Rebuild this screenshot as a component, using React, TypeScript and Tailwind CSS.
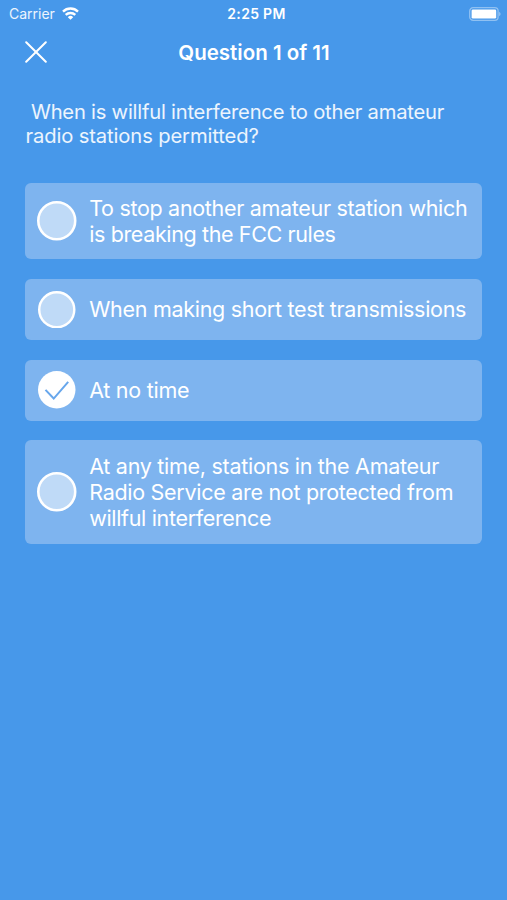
type Line = { text: string; tracking: string };
type Answer = { lines: Line[]; height: string; circle: string; selected?: boolean };

const answers: Answer[] = [
  {
    height: "h-[76.5px]",
    circle: "size-[39.5px]",
    lines: [
      { text: "To stop another amateur station which", tracking: "tracking-[-0.31px]" },
      { text: "is breaking the FCC rules", tracking: "tracking-[-0.37px]" },
    ],
  },
  {
    height: "h-[61px]",
    circle: "size-[37.5px]",
    lines: [{ text: "When making short test transmissions", tracking: "tracking-[-0.29px]" }],
  },
  {
    height: "h-[61px]",
    circle: "size-[37.5px]",
    selected: true,
    lines: [{ text: "At no time", tracking: "tracking-[-0.27px]" }],
  },
  {
    height: "h-[103.5px]",
    circle: "size-[39.5px]",
    lines: [
      { text: "At any time, stations in the Amateur", tracking: "tracking-[-0.28px]" },
      { text: "Radio Service are not protected from", tracking: "tracking-[-0.29px]" },
      { text: "willful interference", tracking: "tracking-[-0.33px]" },
    ],
  },
];

function StatusBar() {
  return (
    <div className="grid h-[27px] grid-cols-[1fr_auto_1fr] items-center pr-[6px] pl-[9px] text-[14px] leading-[17px]">
      <div className="flex items-center gap-[7px]">
        <span className="text-white/90">Carrier</span>
        <svg width="17" height="13" viewBox="0 0 17 13" fill="none" stroke="white" strokeWidth="2.4">
          <path d="M1 4.6a10.8 10.8 0 0 1 15 0" />
          <path d="M3.7 7.9a7 7 0 0 1 9.6 0" />
          <path d="M8.5 12.8 5.8 10.2a3.8 3.8 0 0 1 5.4 0z" fill="white" stroke="none" />
        </svg>
      </div>
      <span className="pl-[3px] text-center font-semibold tracking-[0.3px]">2:25 PM</span>
      <svg className="justify-self-end" width="32" height="14" viewBox="0 0 32 14">
        <rect x="0.7" y="0.7" width="28.4" height="12.6" rx="3.4" fill="none" stroke="white" strokeOpacity=".4" strokeWidth="1.3" />
        <rect x="2.6" y="2.4" width="24.6" height="9.2" rx="1.4" fill="white" />
        <path d="M30.2 4.8c1.8.7 1.8 3.7 0 4.4z" fill="white" fillOpacity=".45" />
      </svg>
    </div>
  );
}

function Marker({ selected, size }: { selected?: boolean; size: string }) {
  return (
    <svg className={`${size} shrink-0`} viewBox="0 0 37 37" fill="none">
      {selected ? (
        <>
          <circle cx="18.5" cy="18.5" r="18.5" fill="white" />
          <path d="M7.4 18.6 15.5 27.2 29.8 10.8" stroke="#68a7ec" strokeWidth="2" />
        </>
      ) : (
        <circle cx="18.5" cy="18.5" r="17.3" fill="#bfdaf7" stroke="white" strokeWidth="2.4" />
      )}
    </svg>
  );
}

function AnswerCard({ answer }: { answer: Answer }) {
  return (
    <button type="button" className={`${answer.height} flex w-full items-center rounded-[6px] bg-[#7eb4ef] text-left`}>
      <span className="flex w-[64.2px] shrink-0 justify-center">
        <Marker selected={answer.selected} size={answer.circle} />
      </span>
      <span className="text-[21.5px] leading-[26px] whitespace-nowrap">
        {answer.lines.map((line) => (
          <span key={line.text} className={`block ${line.tracking}`}>{line.text}</span>
        ))}
      </span>
    </button>
  );
}

export default function App() {
  return (
    <main className="h-[900px] w-full overflow-hidden bg-[#4798ea] font-['Inter','Liberation_Sans',sans-serif] text-white">
      <StatusBar />
      <header className="grid h-[50px] grid-cols-[60px_1fr_60px] items-center px-[25px]">
        <svg width="22" height="22" viewBox="0 0 22 22" stroke="white" strokeWidth="2" strokeLinecap="round">
          <path d="M1.2 1.2 20.8 20.8M20.8 1.2 1.2 20.8" />
        </svg>
        <h1 className="pt-[2px] pl-px text-center text-[20.5px] font-semibold">Question 1 of 11</h1>
      </header>
      <section className="px-[25px]">
        <p className="mt-[23px] pl-[0.5px] text-[20.2px] leading-[24px] whitespace-pre text-white/90">
          <span className="block tracking-[-0.22px]"> When is willful interference to other amateur</span>
          <span className="block tracking-[-0.12px]">radio stations permitted?</span>
        </p>
        <div className="mt-[34.5px] flex flex-col gap-[19.8px]">
          {answers.map((answer) => (
            <AnswerCard key={answer.lines[0].text} answer={answer} />
          ))}
        </div>
      </section>
    </main>
  );
}
